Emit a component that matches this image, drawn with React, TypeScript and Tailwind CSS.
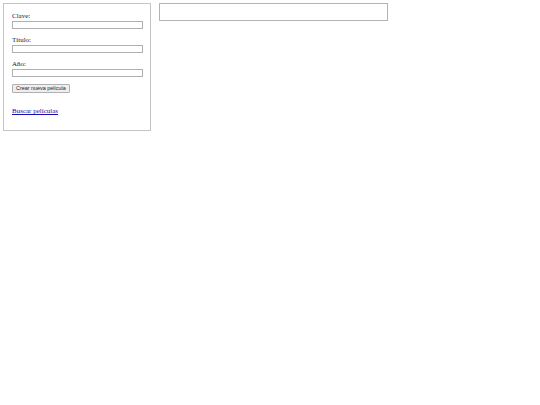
import React from 'react';

const fields = ['Clave:', 'Título:', 'Año:'];

export default function App() {
  return (
    <div className="flex items-start gap-2 p-[3px] bg-white min-h-screen text-[#222] text-[7px] leading-[9px]" style={{ fontFamily: '"Liberation Serif", serif' }}>
      <div className="w-[148px] h-[128px] shrink-0 border border-[#c4c4c4] pt-[8px] pl-[8px] pr-[7px]">
        {fields.map((label) => (
          <div key={label} className="mb-[7px]">
            <label className="block h-[9px]">{label}</label>
            <input type="text" className="block w-full h-[8px] border border-[#b0b0b0] bg-white" />
          </div>
        ))}
        <button
          type="button"
          className="block mt-[1px] h-[9px] px-[3px] text-[5.4px] leading-[7px] border border-[#b0b0b0] rounded-[1px] bg-[#efefef]"
          style={{ fontFamily: '"Liberation Sans", Arial, sans-serif' }}
        >
          Crear nueva película
        </button>
        <div className="mt-[14px]">
          <a href="#" className="text-[#1a0dab] underline decoration-[#1a0dab]">
            Buscar películas
          </a>
        </div>
      </div>
      <div className="w-[229px] h-[18px] border border-[#b4b4b4] bg-white" />
    </div>
  );
}
